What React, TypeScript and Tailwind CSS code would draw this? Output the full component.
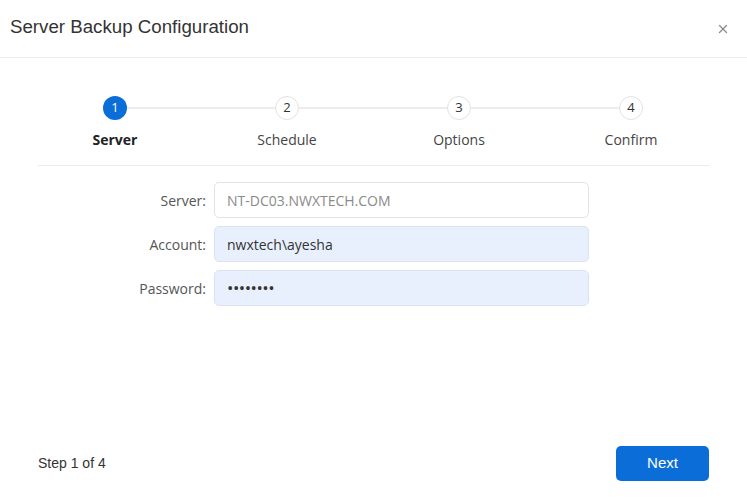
import { X } from "lucide-react";

const steps = ["Server", "Schedule", "Options", "Confirm"];

function Stepper() {
  return (
    <div className="pt-[38px]">
      <div className="flex items-center ml-[103px] w-[540px]">
        {steps.map((s, i) => (
          <div key={s} className={i < steps.length - 1 ? "flex items-center flex-1" : "flex items-center"}>
            {i === 0 ? (
              <div className="w-6 h-6 rounded-full bg-[#0b6ed8] text-white text-[13px] flex items-center justify-center">
                {i + 1}
              </div>
            ) : (
              <div className="w-6 h-6 rounded-full bg-white border border-[#e2e2e2] text-[#333] text-[13px] flex items-center justify-center">
                {i + 1}
              </div>
            )}
            {i < steps.length - 1 && <div className="flex-1 h-[2px] bg-[#ececec]" />}
          </div>
        ))}
      </div>
      <div className="grid grid-cols-4 w-[688px] ml-[29px] mt-[10px]">
        {steps.map((s, i) => (
          <div
            key={s}
            className={
              i === 0
                ? "text-center text-[14px] leading-5 font-bold text-[#222]"
                : "text-center text-[14px] leading-5 text-[#444]"
            }
          >
            {s}
          </div>
        ))}
      </div>
    </div>
  );
}

function Field({ label, value, filled, muted, secret }: { label: string; value: string; filled?: boolean; muted?: boolean; secret?: boolean }) {
  return (
    <div className="flex items-center">
      <label className="w-[176px] text-right pr-2 text-[14px] text-[#555]">{label}</label>
      <div
        className={
          "w-[375px] h-9 rounded-[5px] border px-3 flex items-center " +
          (secret ? "text-[17px] tracking-[-0.5px] " : "text-[14px] ") +
          (filled ? "bg-[#e8f0fe] border-[#dbe3f0] " : "bg-white border-[#e3e3e3] ") +
          (muted ? "text-[#8a8a8a]" : "text-[#333]")
        }
      >
        {value}
      </div>
    </div>
  );
}

export default function App() {
  return (
    <div className="w-[747px] h-[504px] bg-white flex flex-col font-['Open_Sans',sans-serif]">
      <div className="h-[58px] border-b border-[#ececec] flex items-center justify-between pl-[10px] pr-[17px] shrink-0">
        <h1 className="font-['Liberation_Sans',Arial,sans-serif] text-[18.7px] text-[#333] pb-[2px]">Server Backup Configuration</h1>
        <X className="w-[14px] h-[14px] text-[#8a8a8a]" strokeWidth={2.2} />
      </div>

      <Stepper />

      <div className="mx-[38px] mt-[15px] border-t border-[#ececec]" />

      <div className="flex flex-col gap-2 pt-4 pl-[38px]">
        <Field label="Server:" value="NT-DC03.NWXTECH.COM" muted />
        <Field label="Account:" value="nwxtech\ayesha" filled />
        <Field label="Password:" value="••••••••" filled secret />
      </div>

      <div className="mt-auto flex items-center justify-between px-[38px] pb-[23px]">
        <span className="font-['Liberation_Sans',Arial,sans-serif] text-[14px] text-[#333]">Step 1 of 4</span>
        <button className="w-[93px] h-[35px] rounded-[5px] bg-[#0b6ed8] text-white text-[15px] font-['Liberation_Sans',Arial,sans-serif]">
          Next
        </button>
      </div>
    </div>
  );
}
